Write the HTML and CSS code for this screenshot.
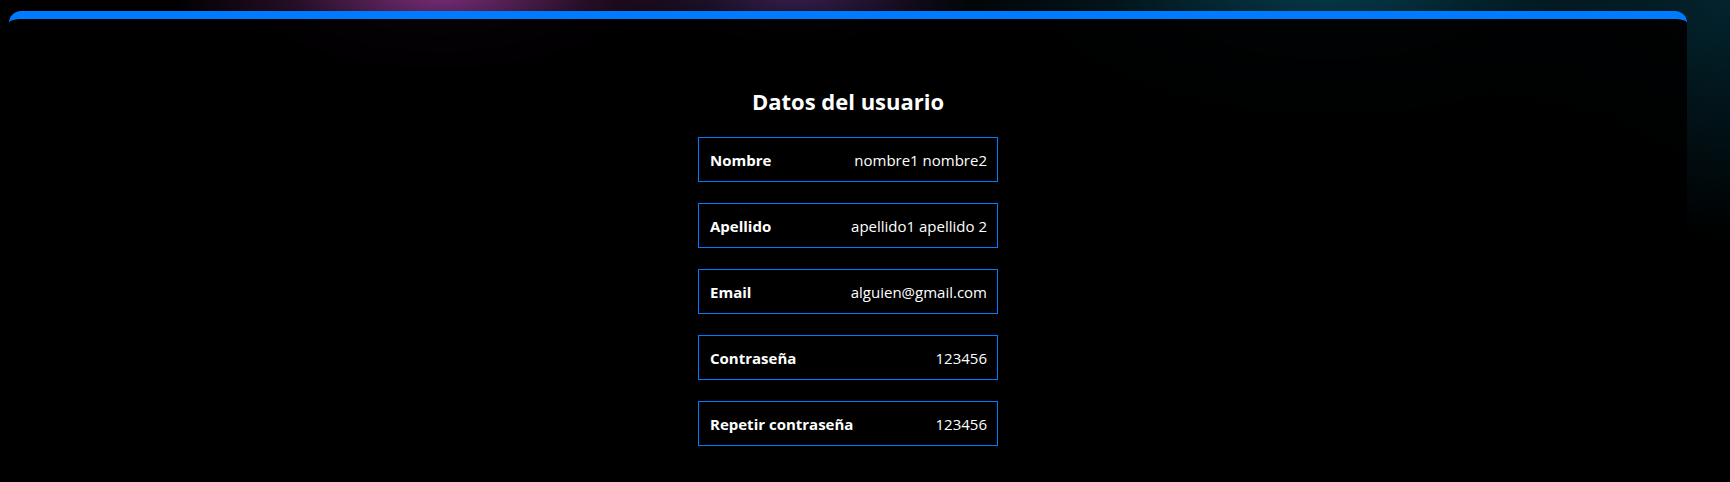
FILE: index.html
```html
<!DOCTYPE html>
<html lang="es">
<head>
<meta charset="utf-8">
<title>Datos del usuario</title>
<link rel="stylesheet" href="styles.css">
</head>
<body>
<div class="page">
  <main class="card">
    <section class="profile">
      <h2 class="profile-title">Datos del usuario</h2>
      <ul class="fields">
        <li class="field"><span class="field-label">Nombre</span><span class="field-value">nombre1 nombre2</span></li>
        <li class="field"><span class="field-label">Apellido</span><span class="field-value">apellido1 apellido 2</span></li>
        <li class="field"><span class="field-label">Email</span><span class="field-value">alguien@gmail.com</span></li>
        <li class="field"><span class="field-label">Contraseña</span><span class="field-value">123456</span></li>
        <li class="field"><span class="field-label">Repetir contraseña</span><span class="field-value">123456</span></li>
      </ul>
    </section>
  </main>
</div>
</body>
</html>
```

FILE: styles.css
```css
* { box-sizing: border-box; }

html, body {
  margin: 0;
  height: 100%;
}

body {
  font-family: "Open Sans", "Noto Sans", "Liberation Sans", sans-serif;
  color: #fff;
  background-color: #000;
  background-image:
    radial-gradient(ellipse 270px 110px at 440px -10px, rgba(130, 50, 130, 0.95), rgba(75, 28, 75, 0.5) 55%, rgba(0, 0, 0, 0) 100%),
    radial-gradient(ellipse 180px 75px at 795px -10px, rgba(70, 40, 100, 0.8), rgba(0, 0, 0, 0) 100%),
    radial-gradient(ellipse 420px 200px at 1330px -30px, rgba(6, 68, 86, 0.95), rgba(4, 40, 52, 0.5) 55%, rgba(0, 0, 0, 0) 100%),
    radial-gradient(ellipse 260px 240px at 1730px 0px, rgba(4, 45, 58, 0.8), rgba(0, 0, 0, 0) 100%);
  background-repeat: no-repeat;
  overflow: hidden;
}

.page {
  padding: 11px 43px 0 9px;
  height: 100%;
}

.card {
  height: 100%;
  background: rgba(0, 0, 0, 0.92);
  border-top: 8px solid #007bff;
  border-radius: 12px 12px 0 0;
  padding-top: 68px;
}

.profile {
  display: flex;
  flex-direction: column;
  align-items: center;
  gap: 21px;
}

.profile-title {
  margin: 0 0 1px;
  font-size: 22px;
  line-height: 28px;
  font-weight: 700;
}

.fields {
  list-style: none;
  margin: 0;
  padding: 0;
  display: flex;
  flex-direction: column;
  gap: 21px;
}

.field {
  width: 300px;
  height: 45px;
  border: 1px solid #007bff;
  padding: 0 10px 0 11px;
  display: flex;
  align-items: center;
  justify-content: space-between;
  font-size: 15px;
}

.field-label {
  font-weight: 700;
}

.field-value {
  font-weight: 400;
}
```
